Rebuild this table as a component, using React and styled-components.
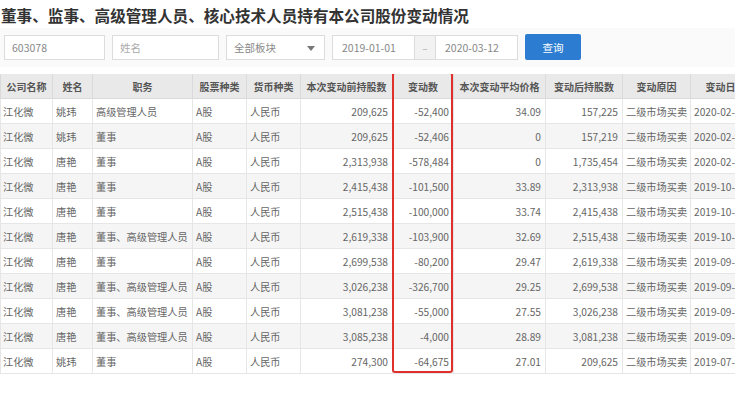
import React from "react";
import styled, { createGlobalStyle } from "styled-components";

const GlobalStyle = createGlobalStyle`
  body {
    margin: 0;
    background: #fff;
    font-family: "Noto Sans CJK SC", "Noto Sans", sans-serif;
  }
`;

const Page = styled.div`
  width: 750px;
  height: 397px;
  padding-top: 5px;
  box-sizing: border-box;
  overflow: hidden;
`;

const Title = styled.h1`
  margin: 0 0 0 1px;
  font-size: 15.6px;
  line-height: 20px;
  font-weight: 700;
  color: #333;
  white-space: nowrap;
`;

const FilterBar = styled.div`
  width: 735px;
  margin-top: 3px;
  padding: 6px 0 7px 4px;
  box-sizing: border-box;
  display: flex;
  align-items: center;
  gap: 7px;
  background: #fafafa;
`;

const Field = styled.div`
  width: ${(p) => p.w}px;
  height: 25px;
  box-sizing: border-box;
  border: 1px solid #dcdcdc;
  background: #fff;
  padding-left: ${(p) => p.pad || 7}px;
  display: flex;
  align-items: center;
  font-size: 10.5px;
  color: ${(p) => (p.muted ? "#aaa" : "#888")};
  position: relative;
`;

const Caret = styled.span`
  position: absolute;
  right: 9px;
  top: 10px;
  border-left: 4px solid transparent;
  border-right: 4px solid transparent;
  border-top: 5px solid #777;
`;

const DateGroup = styled.div`
  display: flex;
  height: 25px;
`;

const Sep = styled.div`
  width: 20px;
  height: 25px;
  box-sizing: border-box;
  border-top: 1px solid #dcdcdc;
  border-bottom: 1px solid #dcdcdc;
  background: #f2f2f2;
  color: #aaa;
  font-size: 10px;
  display: flex;
  align-items: center;
  justify-content: center;
`;

const Button = styled.button`
  width: 56px;
  height: 26px;
  border: none;
  border-radius: 2px;
  background: #2c7dd1;
  color: #fff;
  font-family: inherit;
  font-size: 10.5px;
  padding: 0;
`;

const TableWrap = styled.div`
  position: relative;
  width: 735px;
  margin-top: 7px;
  overflow: hidden;
`;

const Table = styled.table`
  table-layout: fixed;
  border-collapse: collapse;
  width: 760px;
`;

const Th = styled.th`
  height: 24px;
  padding: 0 3px;
  background: #e9e9e9;
  border: 1px solid #dadada;
  border-top: none;
  font-size: 10px;
  font-weight: 700;
  color: #555;
  text-align: center;
  white-space: nowrap;
  overflow: hidden;
`;

const Tr = styled.tr`
  background: ${(p) => (p.odd ? "#f5f5f5" : "#fff")};
`;

const Td = styled.td`
  height: 24px;
  padding: 0 ${(p) => (p.num ? 4 : 2)}px 0 ${(p) => (p.first ? 2 : 3)}px;
  border: 1px solid #e6e6e6;
  border-top: none;
  font-size: 10.2px;
  color: #666;
  text-align: ${(p) => (p.num ? "right" : "left")};
  white-space: nowrap;
  overflow: hidden;
`;

const Highlight = styled.div`
  position: absolute;
  left: 392px;
  top: -2px;
  width: 61px;
  height: 301px;
  box-sizing: border-box;
  border: 2px solid #e0302b;
  border-radius: 3px;
  pointer-events: none;
`;

const columns = [
  { label: "公司名称", w: 52 },
  { label: "姓名", w: 40 },
  { label: "职务", w: 100 },
  { label: "股票种类", w: 54 },
  { label: "货币种类", w: 54 },
  { label: "本次变动前持股数", w: 92, num: true },
  { label: "变动数", w: 61, num: true },
  { label: "本次变动平均价格", w: 92, num: true },
  { label: "变动后持股数", w: 77, num: true },
  { label: "变动原因", w: 68 },
  { label: "变动日期", w: 70 },
];

const rows = [
  ["江化微", "姚玮", "高级管理人员", "A股", "人民币", "209,625", "-52,400", "34.09", "157,225", "二级市场买卖", "2020-02-27"],
  ["江化微", "姚玮", "董事", "A股", "人民币", "209,625", "-52,406", "0", "157,219", "二级市场买卖", "2020-02-27"],
  ["江化微", "唐艳", "董事", "A股", "人民币", "2,313,938", "-578,484", "0", "1,735,454", "二级市场买卖", "2020-02-27"],
  ["江化微", "唐艳", "董事", "A股", "人民币", "2,415,438", "-101,500", "33.89", "2,313,938", "二级市场买卖", "2019-10-16"],
  ["江化微", "唐艳", "董事", "A股", "人民币", "2,515,438", "-100,000", "33.74", "2,415,438", "二级市场买卖", "2019-10-15"],
  ["江化微", "唐艳", "董事、高级管理人员", "A股", "人民币", "2,619,338", "-103,900", "32.69", "2,515,438", "二级市场买卖", "2019-10-11"],
  ["江化微", "唐艳", "董事", "A股", "人民币", "2,699,538", "-80,200", "29.47", "2,619,338", "二级市场买卖", "2019-09-27"],
  ["江化微", "唐艳", "董事、高级管理人员", "A股", "人民币", "3,026,238", "-326,700", "29.25", "2,699,538", "二级市场买卖", "2019-09-26"],
  ["江化微", "唐艳", "董事、高级管理人员", "A股", "人民币", "3,081,238", "-55,000", "27.55", "3,026,238", "二级市场买卖", "2019-09-25"],
  ["江化微", "唐艳", "董事、高级管理人员", "A股", "人民币", "3,085,238", "-4,000", "28.89", "3,081,238", "二级市场买卖", "2019-09-24"],
  ["江化微", "姚玮", "董事", "A股", "人民币", "274,300", "-64,675", "27.01", "209,625", "二级市场买卖", "2019-07-30"],
];

export default function App() {
  return (
    <>
      <GlobalStyle />
      <Page>
        <Title>董事、监事、高级管理人员、核心技术人员持有本公司股份变动情况</Title>
        <FilterBar>
          <Field w={101}>603078</Field>
          <Field w={107} muted>姓名</Field>
          <Field w={99}>
            全部板块
            <Caret />
          </Field>
          <DateGroup>
            <Field w={83} pad={9}>2019-01-01</Field>
            <Sep>–</Sep>
            <Field w={83} pad={9}>2020-03-12</Field>
          </DateGroup>
          <Button>查询</Button>
        </FilterBar>
        <TableWrap>
          <Table>
            <colgroup>
              {columns.map((c) => (
                <col key={c.label} style={{ width: c.w }} />
              ))}
            </colgroup>
            <thead>
              <tr>
                {columns.map((c) => (
                  <Th key={c.label}>{c.label}</Th>
                ))}
              </tr>
            </thead>
            <tbody>
              {rows.map((r, i) => (
                <Tr key={i} odd={i % 2 === 1}>
                  {r.map((v, j) => (
                    <Td key={j} num={columns[j].num} first={j === 0}>
                      {v}
                    </Td>
                  ))}
                </Tr>
              ))}
            </tbody>
          </Table>
          <Highlight />
        </TableWrap>
      </Page>
    </>
  );
}
